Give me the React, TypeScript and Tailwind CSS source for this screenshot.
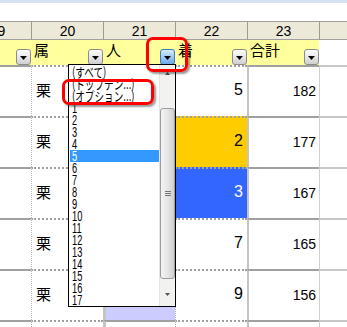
import clsx from "clsx";

const jp = "font-['Noto_Sans_CJK_JP',sans-serif]";
const en = "font-['Liberation_Sans',Arial,sans-serif]";
const cols = "grid grid-cols-[67px_72px_72px_72px_72px_100px] ml-[-36px] w-[455px]";

const rows = [
  { a: "5", b: "182", cell: "" },
  { a: "2", b: "177", cell: "bg-[#ffcc00]" },
  { a: "3", b: "167", cell: "bg-[#3366ff] text-white" },
  { a: "7", b: "165", cell: "" },
  { a: "9", b: "156", cell: "", pick: true },
];

const items = [
  "(すべて)",
  "(トップテン...)",
  "(オプション...)",
  "1", "2", "3", "4", "5", "6", "7", "8", "9",
  "10", "11", "12", "13", "14", "15", "16", "17",
];

function FilterBtn({ active }: { active?: boolean }) {
  return (
    <div
      className={clsx(
        "w-[15px] h-[16px] rounded-[3px] border flex items-center justify-center pt-[2px]",
        active
          ? "border-[#3d7bbf] bg-linear-to-b from-[#d6ebff] to-[#6aa8ea]"
          : "border-[#8c8c8c] bg-linear-to-b from-white to-[#d0d0d0]"
      )}
    >
      <svg width="7" height="4" viewBox="0 0 7 4">
        <path d="M0 0h7L3.5 4z" fill="#000" />
      </svg>
    </div>
  );
}

export default function App() {
  return (
    <div className={`relative w-[347px] h-[327px] overflow-hidden bg-white ${en}`}>
      <div className="h-[3px] bg-[#d6e2f2]" />
      <div className="h-[18px]" />

      {/* column numbers */}
      <div className={`${cols} h-[19px] border-y border-[#a0a0a0] bg-[#ece9d8] text-[14px] text-black`}>
        {["19", "20", "21", "22", "23", ""].map((t, i) => (
          <div
            key={i}
            className={clsx("flex items-center justify-center leading-none", i > 0 && "border-l border-[#a09c8c]")}
          >
            {t}
          </div>
        ))}
      </div>

      {/* filter row */}
      <div className={`${cols} h-[25px] text-[15px] ${jp}`}>
        {["", "属", "人", "着", "合計"].map((t, i) => (
          <div key={i} className="relative bg-[#ffff9c] flex justify-between items-end">
            <span className="self-start pl-[3px] leading-[18px] pt-[1px]">{t}</span>
            <FilterBtn active={i === 2} />
          </div>
        ))}
        <div />
      </div>

      {/* data rows */}
      {[...rows, { a: "", b: "", cell: "", pick: false }].map((r, i) => (
        <div key={i} className={`${cols} h-[51px]`}>
          <div className="border-t-2 border-[#a0a0a0]" />
          <div className="border-t-2 border-t-[#a0a0a0] border-l border-l-[#b8b8b8] border-dotted flex items-center pl-[4px] pb-[2px]">
            {i < 5 && <span className={`${jp} text-[15px]`}>栗</span>}
          </div>
          <div
            className={clsx(
              "border-t-2 border-t-[#a0a0a0] border-l-[3px] border-l-[#c4c4c4]",
              r.pick && "bg-[#ccccff]"
            )}
          />
          <div
            className={clsx(
              "border-t-2 border-t-[#a0a0a0] border-l border-l-[#b8b8b8] border-dotted flex items-center justify-end pr-[4px] pb-[4px] text-[16px]",
              r.cell
            )}
          >
            {r.a}
          </div>
          <div className="border-t-2 border-t-[#a0a0a0] border-l-2 border-l-[#c4c4c4] flex items-center justify-end pr-[3px] text-[14px]">
            {r.b}
          </div>
          <div className="border-t-2 border-t-[#c8c8c8] border-l border-l-[#d0d0d0]" />
        </div>
      ))}

      {/* auto filter dropdown */}
      <div className="absolute left-[68px] top-[64px] w-[108px] h-[243px] border border-black bg-white flex">
        <div className="w-[90px] pt-[1px] flex flex-col">
          {items.map((t) => {
            const isJp = t.startsWith("(");
            return (
              <div
                key={t}
                className={clsx(
                  "h-[12px] leading-[12px] ml-[1px] pl-[2px] whitespace-nowrap",
                  t === "5" ? "bg-[#3399ff] text-white" : "text-black"
                )}
              >
                <span
                  className={clsx(
                    "inline-block origin-left",
                    isJp ? `${jp} text-[13px] scale-x-[0.74]` : `${en} text-[14px] scale-x-[0.66]`
                  )}
                >
                  {t}
                </span>
              </div>
            );
          })}
        </div>
        <div className="flex-1 bg-[#f2f2f0] border-l border-[#e4e4e4] flex flex-col items-center">
          <svg width="5" height="3" viewBox="0 0 5 3" className="mt-[7px]">
            <path d="M0 3h5L2.5 0z" fill="#555" />
          </svg>
          <div className="mt-[33px] w-[15px] h-[171px] rounded-[3px] border border-[#9c9c9c] bg-linear-to-r from-[#f4f4f4] via-[#e6e6e6] to-[#cfcfcf] flex flex-col items-center justify-center gap-[1px]">
            <div className="w-[6px] h-px bg-[#777]" />
            <div className="w-[6px] h-px bg-[#777]" />
            <div className="w-[6px] h-px bg-[#777]" />
          </div>
          <svg width="5" height="3" viewBox="0 0 5 3" className="mt-[14px]">
            <path d="M0 0h5L2.5 3z" fill="#555" />
          </svg>
        </div>
      </div>

      {/* highlight marks */}
      <div className="absolute left-[146px] top-[37px] w-[42px] h-[35px] border-[3px] border-[#ff0000] rounded-[7px] shadow-[2px_2px_2px_rgba(0,0,0,0.4)]" />
      <div className="absolute left-[62px] top-[79px] w-[92px] h-[26px] border-[3px] border-[#ff0000] rounded-[7px] shadow-[2px_2px_2px_rgba(0,0,0,0.4)]" />
    </div>
  );
}
